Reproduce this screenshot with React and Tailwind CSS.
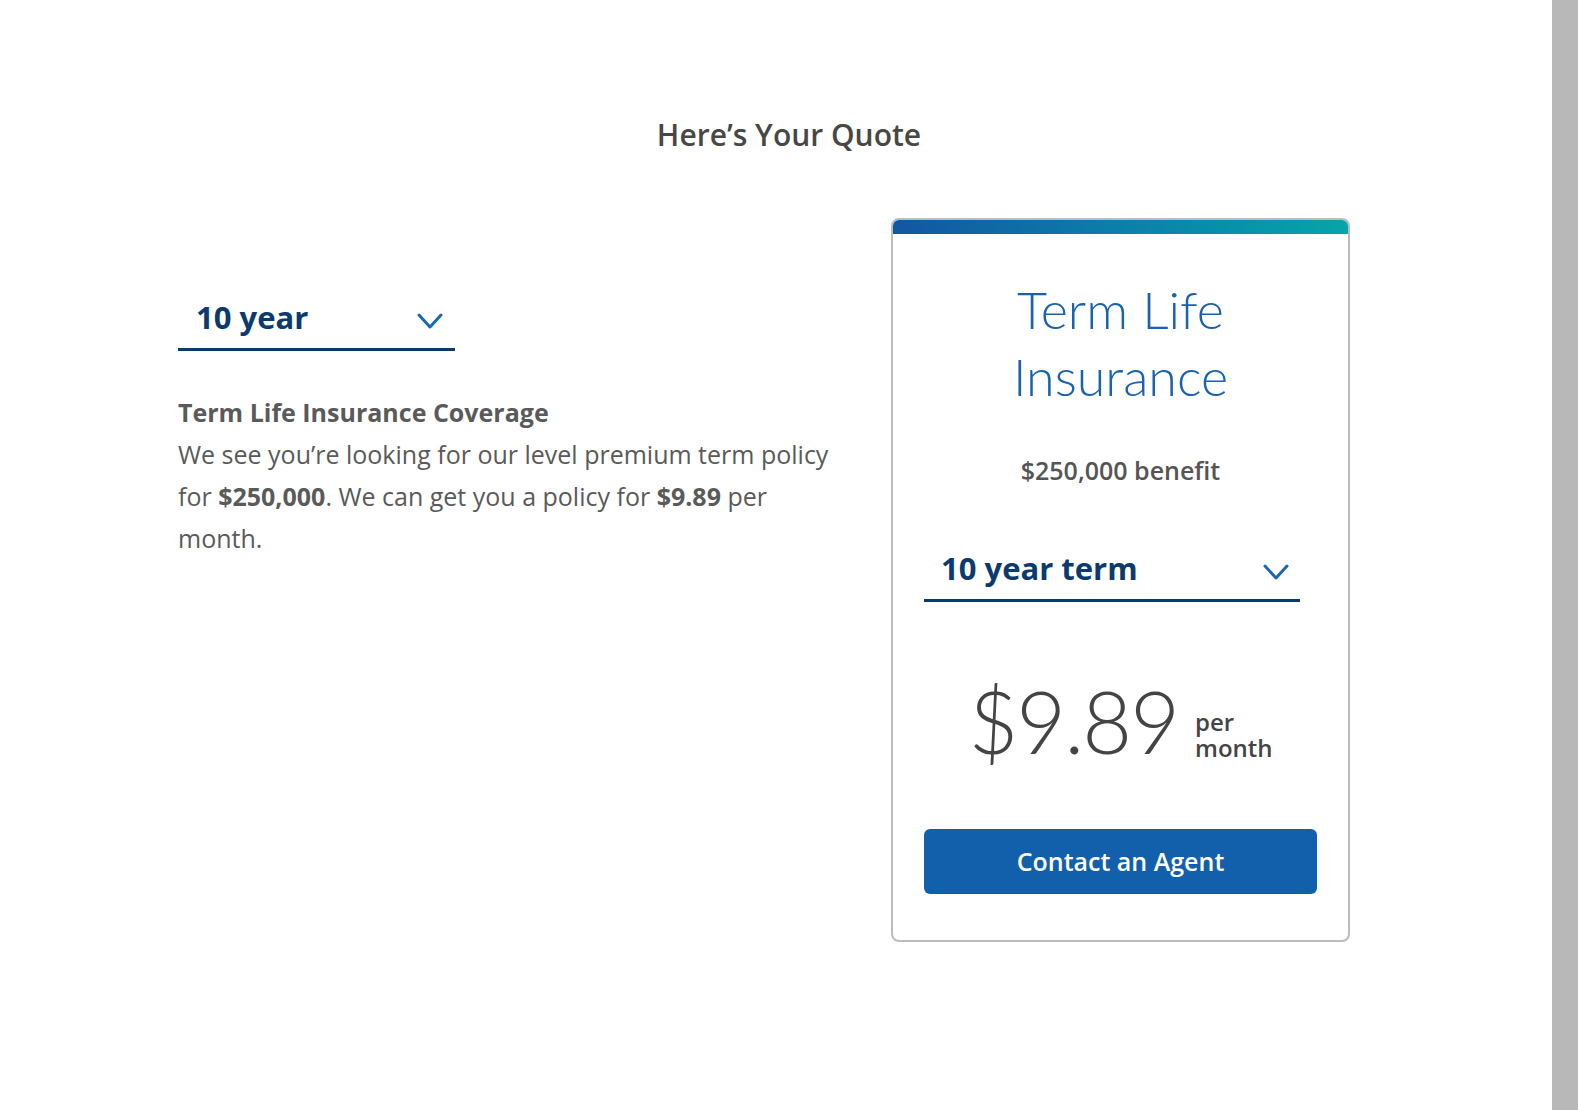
export default function App() {
  const font = { fontFamily: "'Open Sans', Lato, sans-serif" };
  const light = { fontFamily: "Lato, 'Open Sans', sans-serif" };
  const Chevron = () => (
    <svg className="mt-[8px]" width="26" height="17" viewBox="0 0 26 17" fill="none">
      <polyline points="2,2 13,14 24,2" stroke="#1a67b3" strokeWidth="3" strokeLinecap="round" strokeLinejoin="round" />
    </svg>
  );
  return (
    <div className="flex min-h-[1110px] w-full bg-white" style={font}>
      <div className="flex-1">
        <h1 className="pl-[26px] pt-[115px] text-center text-[30px] leading-[40px] font-semibold text-[#474747]">
          Here’s Your Quote
        </h1>
        <div className="mt-[63px] flex pl-[178px]">
          <div className="w-[713px] pt-[77px]">
            <div className="flex w-[277px] items-center justify-between border-b-[3px] border-[#0b3a70] pb-[9px] pl-[18px] pr-[12px]">
              <span className="text-[31px] font-bold leading-[44px] text-[#0b3a70]">10 year</span>
              <Chevron />
            </div>
            <div className="mt-[40px] w-[668px] text-[25px] leading-[42px] text-[#5a5a5a]">
              <div className="font-bold">Term Life Insurance Coverage</div>
              <p>
                We see you’re looking for our level premium term policy for{" "}
                <b className="font-bold">$250,000</b>. We can get you a policy for{" "}
                <b className="font-bold">$9.89</b> per month.
              </p>
            </div>
          </div>
          <div className="flex w-[459px] flex-col overflow-hidden rounded-[8px] border-2 border-[#bcbcbc] bg-white">
            <div className="h-[14px] bg-gradient-to-r from-[#1356a1] via-[#0c7fa9] to-[#07a4aa]" />
            <div className="flex flex-col items-center px-[31px] pb-[46px]">
              <div
                className="mt-[42px] text-center text-[52px] font-light leading-[67px] text-[#1862b0]"
                style={light}
              >
                Term Life
                <br />
                Insurance
              </div>
              <div className="mt-[45px] text-[25px] font-semibold leading-[30px] text-[#555555]">$250,000 benefit</div>
              <div className="mt-[61px] flex w-[376px] items-center justify-between self-start border-b-[3px] border-[#0b3a70] pb-[9px] pl-[17px] pr-[11px]">
                <span className="text-[31px] font-bold leading-[44px] text-[#0b3a70]">10 year term</span>
                <Chevron />
              </div>
              <div className="mt-[69px] flex items-end gap-[17px]">
                <span className="text-[86px] font-light leading-[100px] tracking-[-2px] text-[#444444]" style={light}>
                  $9.89
                </span>
                <span className="mb-[10px] text-[24px] font-semibold leading-[26px] text-[#444444]">
                  per
                  <br />
                  month
                </span>
              </div>
              <button className="mt-[58px] flex h-[65px] w-full items-center justify-center rounded-[6px] bg-[#1260ab] text-[25px] font-semibold text-white">
                Contact an Agent
              </button>
            </div>
          </div>
        </div>
      </div>
      <div className="w-[26px] shrink-0 bg-[#b8b8b8]" />
    </div>
  );
}
